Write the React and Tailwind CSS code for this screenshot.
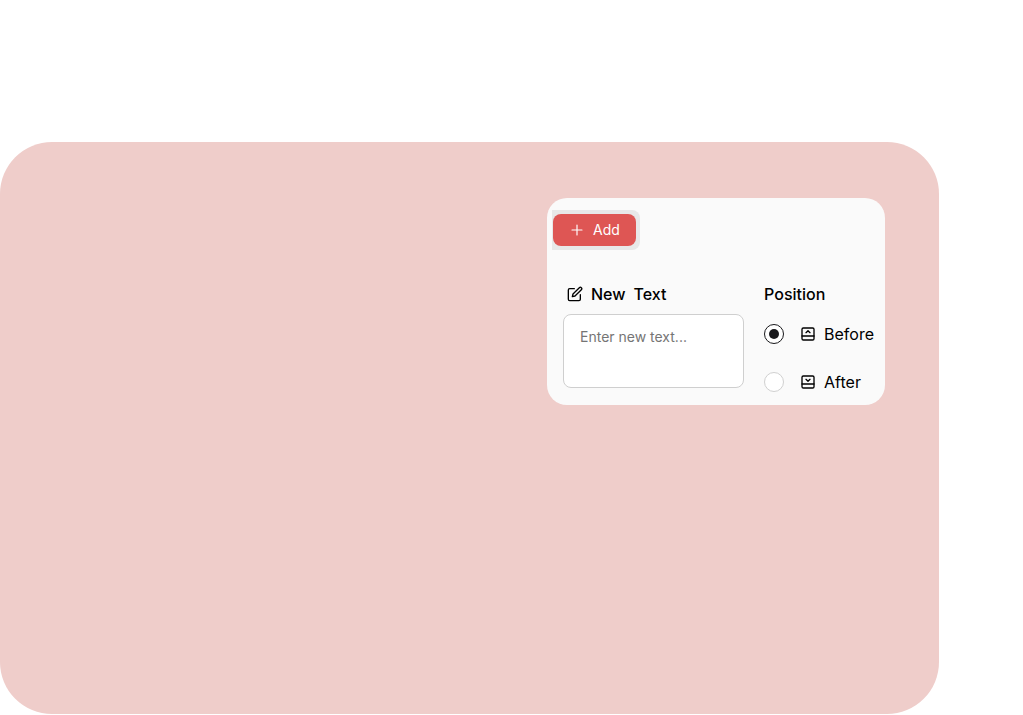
import { useState } from 'react';
import { PanelBottomClose, PanelBottomOpen } from 'lucide-react';
import { FiEdit } from 'react-icons/fi';

const positions = [
  { value: 'before', label: 'Before', icon: PanelBottomOpen },
  { value: 'after', label: 'After', icon: PanelBottomClose },
];

const PlusIcon = () => (
  <svg
    className="size-4"
    viewBox="0 0 24 24"
    fill="none"
    stroke="currentColor"
    strokeWidth="1.75"
    strokeLinecap="round"
    aria-hidden="true"
  >
    <path d="M12 4.5v15M4.5 12h15" />
  </svg>
);

const AddButton = () => (
  <div className="ml-[5px] self-start rounded-r-lg bg-[#e8e8e8] py-1 pr-1 pl-px">
    <button
      type="button"
      className="flex h-8 items-center gap-2 rounded-lg bg-[#de5654] px-4 text-sm text-white"
    >
      <PlusIcon />
      Add
    </button>
  </div>
);

// Text area with its label
const NewTextField = () => (
  <div className="min-w-0 flex-1">
    <label htmlFor="new-text" className="flex items-center gap-2 pl-1 font-medium">
      <FiEdit size={16} aria-hidden="true" />
      <span>New</span>
      <span>Text</span>
    </label>
    <textarea
      id="new-text"
      placeholder="Enter new text..."
      className="mt-2 block h-[74px] w-full resize-none rounded-lg border border-[#cfcfcf] bg-white px-4 py-3 text-sm placeholder:text-[#757575]"
    />
  </div>
);

// Before / after radio list
const PositionField = () => {
  const [position, setPosition] = useState('before');

  return (
    <fieldset>
      <legend className="font-medium">Position</legend>
      <div className="mt-4 flex flex-col gap-6">
        {positions.map(({ value, label, icon: Icon }) => (
          <label key={value} className="flex items-center">
            <input
              type="radio"
              name="position"
              value={value}
              checked={position === value}
              onChange={() => setPosition(value)}
              className="grid size-5 appearance-none place-items-center rounded-full border border-[#d0d0d0] bg-white before:size-[10px] before:rounded-full checked:border-[#18181b] checked:before:bg-[#18181b]"
            />
            <Icon size={16} className="mr-2 ml-4" aria-hidden="true" />
            {label}
          </label>
        ))}
      </div>
    </fieldset>
  );
};

export default function App() {
  return (
    <main className="mt-[142px] mr-[84px] flex min-h-[80vh] items-start justify-end rounded-[52px] bg-[#efcdca] pt-14 pr-[54px] font-['Inter',sans-serif] text-black">
      <form className="flex w-[338px] flex-col rounded-[20px] bg-[#fafafa] pt-3 pb-[11px]">
        <AddButton />
        <div className="mt-8 flex gap-5 pr-[11px] pl-4">
          <NewTextField />
          <PositionField />
        </div>
      </form>
    </main>
  );
}
